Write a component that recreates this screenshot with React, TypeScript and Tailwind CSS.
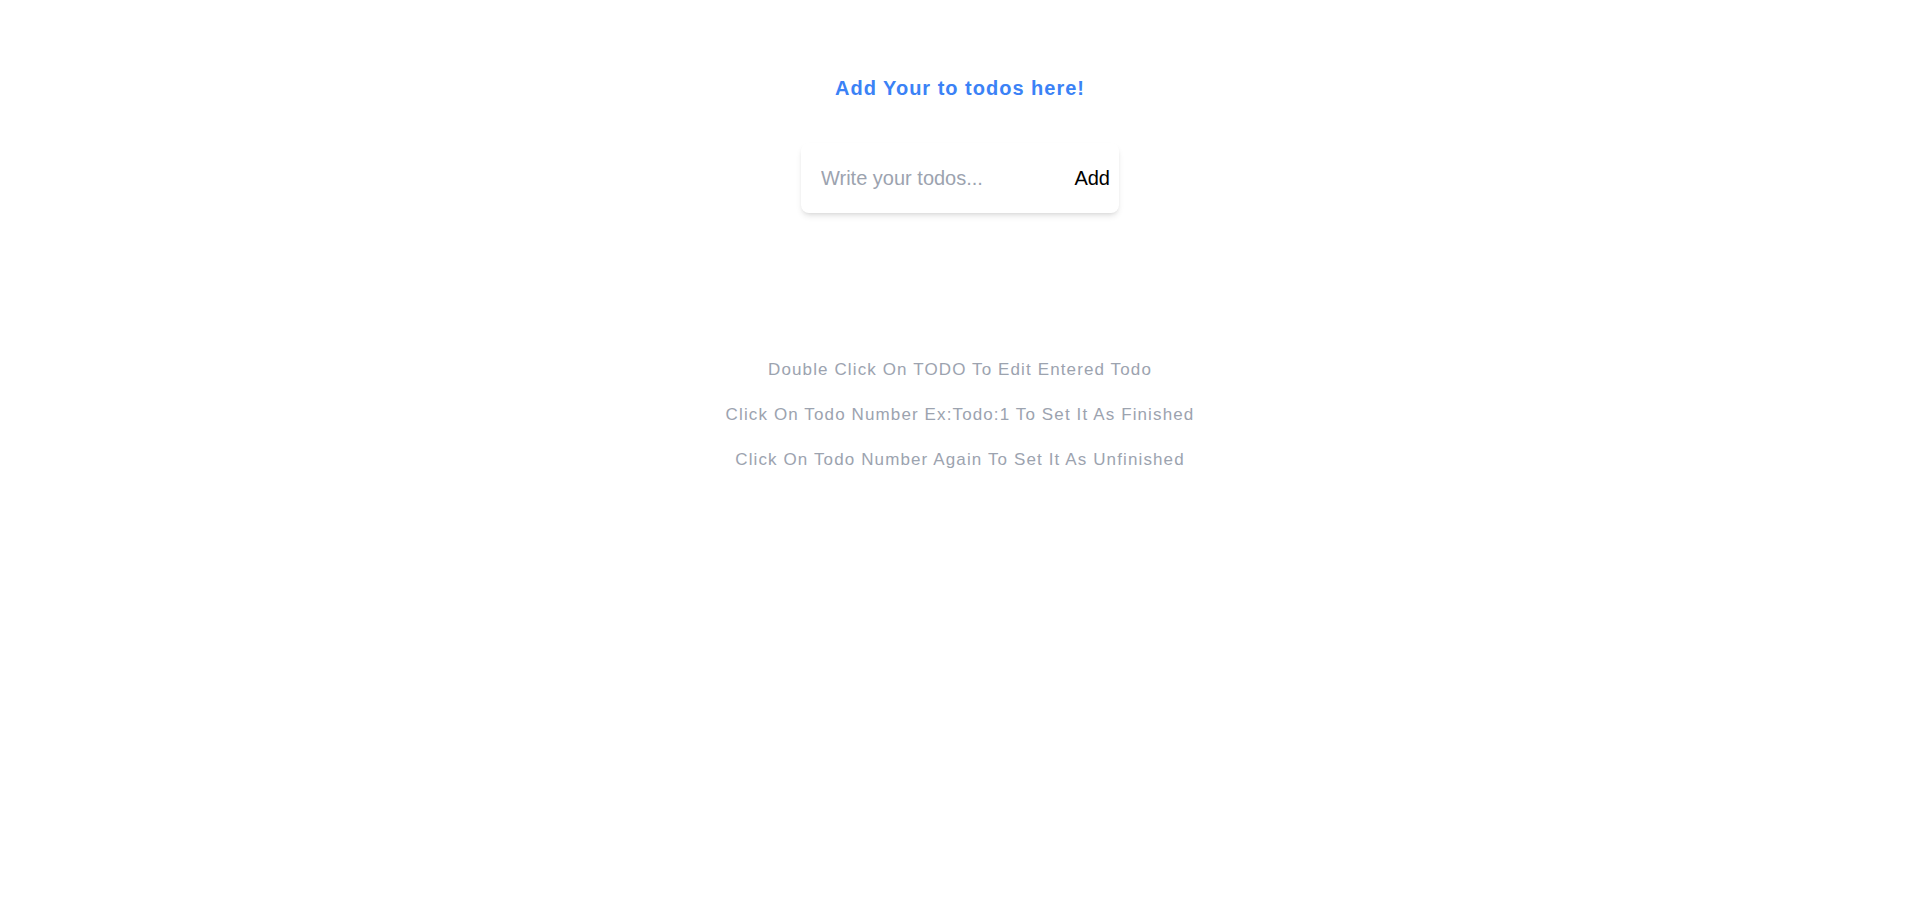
import { useState } from "react";

function App() {
    const [todo, setTodo] = useState("");

    return (
        <main className="min-h-screen bg-white flex flex-col items-center pt-[74px] font-['Liberation_Sans',Arial,sans-serif]">
            <h1 className="text-xl leading-7 font-bold tracking-wider text-[#3b82f6]">
                Add Your to todos here!
            </h1>

            <form
                className="mt-[41px] w-[318px] h-[70px] flex items-center rounded-lg bg-white shadow-md"
                onSubmit={(e) => e.preventDefault()}
            >
                <input
                    type="text"
                    value={todo}
                    onChange={(e) => setTodo(e.target.value)}
                    placeholder="Write your todos..."
                    className="flex-1 min-w-0 h-full pl-5 bg-transparent text-xl outline-none placeholder:text-[#9ca3af]"
                />
                <button type="submit" className="pr-[9px] pl-2 text-xl text-black">
                    Add
                </button>
            </form>

            <div className="mt-[145px] flex flex-col items-center gap-[21px] text-[17px] leading-6 tracking-[0.066em] text-[#9ca3af]">
                <p>Double Click On TODO To Edit Entered Todo</p>
                <p>Click On Todo Number Ex:Todo:1 To Set It As Finished</p>
                <p>Click On Todo Number Again To Set It As Unfinished</p>
            </div>
        </main>
    );
}

export default App;
